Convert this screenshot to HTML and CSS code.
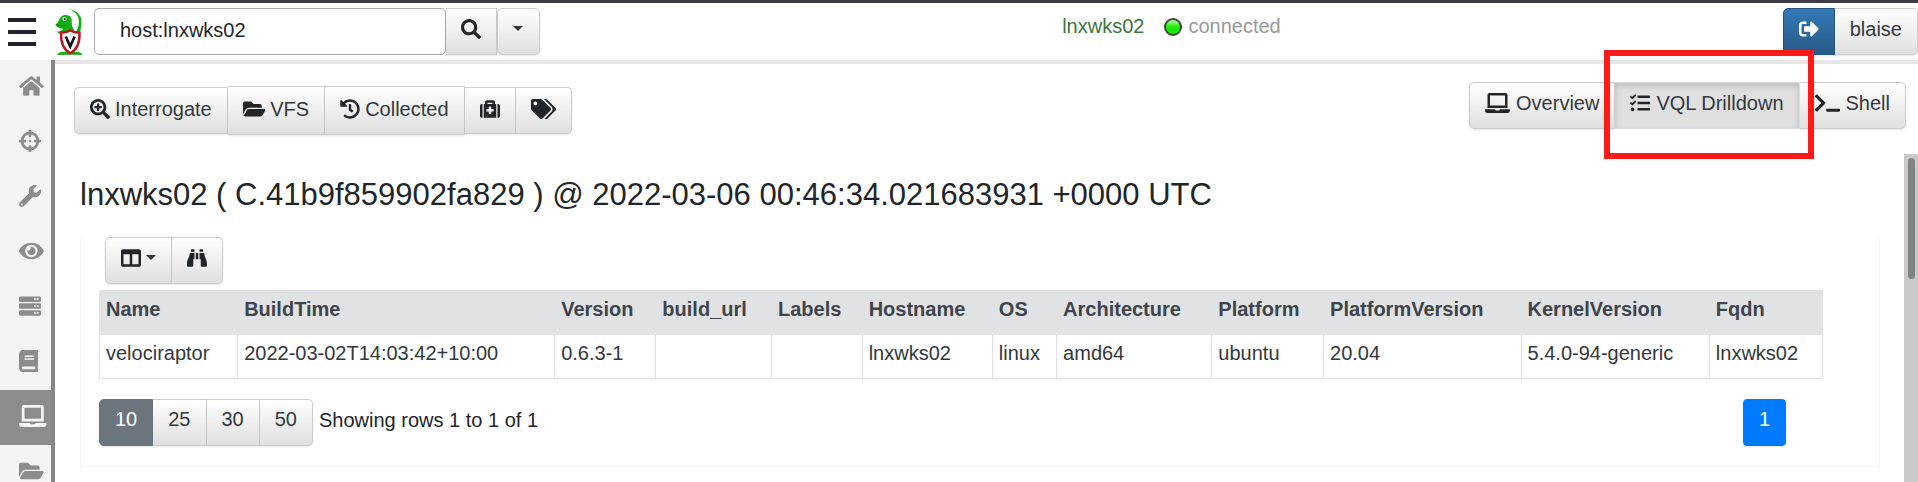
FILE: index.html
```html
<!DOCTYPE html>
<html lang="en">
<head>
<meta charset="utf-8">
<title>Velociraptor - VQL Drilldown</title>
<link rel="stylesheet" href="styles.css">
</head>
<body>
<header class="topbar">
  <button class="menu" aria-label="Menu"><span></span><span></span><span></span></button>
  <svg class="logo" viewBox="0 0 28 46" aria-hidden="true">
    <path d="M14.500 .3C20 1.500 26 5 26.400 11c.3 5-.6 10-1.800 13l-3.400-1.500c2.400-4 3.300-9 2.300-13C22.600 5 19 2.500 14.500.3z" fill="#10b010"/>
    <path d="M.4 15.600 3 13.500C4.500 9.500 6 6.500 10 6c4.500-.4 7 2.500 6.800 6.500-.2 3 0 6 3 9L13 22l-7.500 3c-2-.3-3-1.500-3.300-2.600 2 .4 4-.5 6-2.400C5.500 19.500 1 18.500.4 15.600z" fill="#10b010"/>
    <path d="M1.500 15.600c3 1.400 6 1.600 9 .6" stroke="#06700a" fill="none"/>
    <circle cx="9.500" cy="10" r="2" fill="#fff"/><circle cx="9.800" cy="10.100" r="1" fill="#111"/>
    <path d="M2 46c1-2.600 5-3.600 8-3.200h9c4-.4 7.500.5 8.600 3.200l-9-.3H12z" fill="#10b010"/>
    <path d="M15.300 21.500c3 1.800 6 2.300 9.200 2.300.4 9-1.500 16.500-9.200 20.400C7.600 40.300 5.700 32.800 6.100 23.800c3.200 0 6.200-.5 9.200-2.300z" fill="#fff" stroke="#c01420" stroke-width="2.400"/>
    <path d="M10.800 27.500l4.400 10 4.400-10" fill="none" stroke="#111" stroke-width="2.600"/>
  </svg>
  <form class="search">
    <input type="text" value="host:lnxwks02" aria-label="Search clients">
    <button class="btn" type="button" aria-label="Search"><svg viewBox="0 0 512 512"><path d="M505 442.700L405.300 343c-4.500-4.500-10.600-7-17-7H372c27.600-35.300 44-79.700 44-128C416 93.100 322.900 0 208 0S0 93.100 0 208s93.100 208 208 208c48.300 0 92.700-16.400 128-44v16.300c0 6.400 2.500 12.500 7 17l99.700 99.700c9.400 9.400 24.600 9.400 33.900 0l28.300-28.300c9.400-9.400 9.400-24.600.1-34zM208 336c-70.700 0-128-57.200-128-128 0-70.700 57.200-128 128-128 70.700 0 128 57.200 128 128 0 70.700-57.200 128-128 128z"/></svg></button>
    <button class="btn" type="button" aria-label="Search options"><span class="caret"></span></button>
  </form>
  <div class="client"><a href="#client">lnxwks02</a><span class="led"></span><span>connected</span></div>
  <div class="group user">
    <button class="btn primary" aria-label="Log out"><svg viewBox="0 0 512 512"><path d="M497 273L329 441c-15 15-41 4.500-41-17v-96H152c-13.300 0-24-10.700-24-24v-96c0-13.300 10.700-24 24-24h136V88c0-21.400 25.900-32 41-17l168 168c9.300 9.400 9.300 24.600 0 34zM192 436v-40c0-6.600-5.400-12-12-12H96c-17.700 0-32-14.300-32-32V160c0-17.700 14.300-32 32-32h84c6.600 0 12-5.400 12-12V76c0-6.600-5.400-12-12-12H96c-53 0-96 43-96 96v192c0 53 43 96 96 96h84c6.600 0 12-5.400 12-12z"/></svg></button>
    <button class="btn">blaise</button>
  </div>
</header>
<div class="layout">
  <nav class="sidebar">
    <a href="#home" aria-label="Home"><svg viewBox="0 0 576 512"><path d="M280.370 148.260L96 300.110V464a16 16 0 0 0 16 16l112.060-.29a16 16 0 0 0 15.920-16V368a16 16 0 0 1 16-16h64a16 16 0 0 1 16 16v95.640a16 16 0 0 0 16 16.050L464 480a16 16 0 0 0 16-16V300L295.670 148.260a12.190 12.190 0 0 0-15.300 0zM571.600 251.470L488 182.560V44.050a12 12 0 0 0-12-12h-56a12 12 0 0 0-12 12v72.610L318.470 43a48 48 0 0 0-61 0L4.340 251.470a12 12 0 0 0-1.600 16.900l25.500 31A12 12 0 0 0 45.150 301l235.220-193.740a12.190 12.190 0 0 1 15.300 0L530.900 301a12 12 0 0 0 16.900-1.600l25.500-31a12 12 0 0 0-1.700-16.930z"/></svg></a>
    <a href="#hunts" aria-label="Hunts"><svg viewBox="0 0 512 512"><path d="M500 224h-30.364C455.724 130.325 381.675 56.276 288 42.364V12c0-6.627-5.373-12-12-12h-40c-6.627 0-12 5.373-12 12v30.364C130.325 56.276 56.276 130.325 42.364 224H12c-6.627 0-12 5.373-12 12v40c0 6.627 5.373 12 12 12h30.364C56.276 381.675 130.325 455.724 224 469.636V500c0 6.627 5.373 12 12 12h40c6.627 0 12-5.373 12-12v-30.364C381.675 455.724 455.724 381.675 469.636 288H500c6.627 0 12-5.373 12-12v-40c0-6.627-5.373-12-12-12zM288 404.634V364c0-6.627-5.373-12-12-12h-40c-6.627 0-12 5.373-12 12v40.634C165.826 392.232 119.783 346.243 107.366 288H148c6.627 0 12-5.373 12-12v-40c0-6.627-5.373-12-12-12h-40.634C119.768 165.826 165.757 119.783 224 107.366V148c0 6.627 5.373 12 12 12h40c6.627 0 12-5.373 12-12v-40.634C346.174 119.768 392.217 165.757 404.634 224H364c-6.627 0-12 5.373-12 12v40c0 6.627 5.373 12 12 12h40.634C392.232 346.174 346.243 392.217 288 404.634zM288 256c0 17.673-14.327 32-32 32s-32-14.327-32-32c0-17.673 14.327-32 32-32s32 14.327 32 32z"/></svg></a>
    <a href="#artifacts" aria-label="Artifacts"><svg viewBox="0 0 512 512"><path d="M507.730 109.100c-2.240-9.030-13.540-12.090-20.120-5.510l-74.360 74.360-67.880-11.310-11.310-67.880 74.360-74.360c6.620-6.620 3.430-17.900-5.660-20.160-47.380-11.740-99.550.91-136.580 37.930-39.640 39.640-50.550 97.100-34.050 147.200L18.740 402.760c-24.990 24.990-24.990 65.510 0 90.500 24.990 24.990 65.510 24.990 90.500 0l213.210-213.210c50.120 16.710 107.470 5.680 147.370-34.220 37.070-37.070 49.700-89.320 37.910-136.730zM64 472c-13.250 0-24-10.750-24-24 0-13.260 10.750-24 24-24s24 10.740 24 24c0 13.250-10.750 24-24 24z"/></svg></a>
    <a href="#events" aria-label="Server events"><svg viewBox="0 0 576 512"><path d="M572.520 241.400C518.290 135.590 410.930 64 288 64S57.680 135.640 3.480 241.410a32.350 32.350 0 0 0 0 29.190C57.710 376.410 165.070 448 288 448s230.320-71.640 284.520-177.410a32.350 32.350 0 0 0 0-29.190zM288 400a144 144 0 1 1 144-144 143.930 143.930 0 0 1-144 144zm0-240a95.310 95.310 0 0 0-25.310 3.790 47.850 47.850 0 0 1-66.900 66.900A95.780 95.780 0 1 0 288 160z"/></svg></a>
    <a href="#server" aria-label="Server artifacts"><svg viewBox="0 0 512 512"><path fill-rule="evenodd" d="M480 160H32c-18 0-32-14-32-32V64c0-18 14-32 32-32h448c18 0 32 14 32 32v64c0 18-14 32-32 32zM344 96a24 24 0 1 0 48 0 24 24 0 1 0-48 0zM408 96a24 24 0 1 0 48 0 24 24 0 1 0-48 0zM480 320H32c-18 0-32-14-32-32v-64c0-18 14-32 32-32h448c18 0 32 14 32 32v64c0 18-14 32-32 32zM344 256a24 24 0 1 0 48 0 24 24 0 1 0-48 0zM408 256a24 24 0 1 0 48 0 24 24 0 1 0-48 0zM480 480H32c-18 0-32-14-32-32v-64c0-18 14-32 32-32h448c18 0 32 14 32 32v64c0 18-14 32-32 32zM344 416a24 24 0 1 0 48 0 24 24 0 1 0-48 0zM408 416a24 24 0 1 0 48 0 24 24 0 1 0-48 0z"/></svg></a>
    <a href="#notebooks" aria-label="Notebooks"><svg viewBox="0 0 448 512"><path d="M448 360V24c0-13.300-10.700-24-24-24H96C43 0 0 43 0 96v320c0 53 43 96 96 96h328c13.300 0 24-10.700 24-24v-16c0-7.500-3.500-14.300-8.900-18.700-4.200-15.400-4.200-59.300 0-74.700 5.400-4.300 8.900-11.100 8.900-18.600zM128 134c0-3.300 2.700-6 6-6h212c3.300 0 6 2.700 6 6v20c0 3.300-2.700 6-6 6H134c-3.300 0-6-2.700-6-6v-20zm0 64c0-3.300 2.700-6 6-6h212c3.300 0 6 2.700 6 6v20c0 3.300-2.700 6-6 6H134c-3.300 0-6-2.700-6-6v-20zm253.400 250H96c-17.700 0-32-14.300-32-32 0-17.600 14.400-32 32-32h285.400c-1.900 17.100-1.900 46.900 0 64z"/></svg></a>
    <a href="#host" class="active" aria-label="Host information"><svg viewBox="0 0 640 512"><path d="M624 416H381.540c-.74 19.810-14.710 32-32.740 32H288c-18.690 0-33.020-17.470-32.770-32H16c-8.800 0-16 7.200-16 16v16c0 35.200 28.800 64 64 64h512c35.200 0 64-28.800 64-64v-16c0-8.800-7.200-16-16-16zM576 48c0-26.400-21.600-48-48-48H112C85.600 0 64 21.600 64 48v336h512V48zm-64 272H128V64h384v256z"/></svg></a>
    <a href="#vfs" aria-label="Virtual filesystem"><svg viewBox="0 0 576 512"><path d="M572.694 292.093L500.270 416.248A63.997 63.997 0 0 1 444.989 448H45.025c-18.523 0-30.064-20.093-20.731-36.093l72.424-124.155A64 64 0 0 1 152 256h399.964c18.523 0 30.064 20.093 20.730 36.093zM152 224h328v-48c0-26.510-21.490-48-48-48H272l-64-64H48C21.490 64 0 85.490 0 112v278.046l69.077-118.418C86.214 242.250 117.989 224 152 224z"/></svg></a>
  </nav>
  <main class="main">
    <div class="toolbar">
      <div class="group actions">
        <button class="btn"><svg viewBox="0 0 512 512"><path d="M304 192v32c0 6.600-5.400 12-12 12h-56v56c0 6.600-5.400 12-12 12h-32c-6.600 0-12-5.400-12-12v-56h-56c-6.600 0-12-5.400-12-12v-32c0-6.600 5.400-12 12-12h56v-56c0-6.600 5.400-12 12-12h32c6.600 0 12 5.400 12 12v56h56c6.600 0 12 5.400 12 12zM505 442.700L405.300 343c-4.500-4.500-10.600-7-17-7H372c27.600-35.300 44-79.700 44-128C416 93.100 322.900 0 208 0S0 93.100 0 208s93.100 208 208 208c48.300 0 92.700-16.400 128-44v16.300c0 6.400 2.500 12.500 7 17l99.700 99.700c9.400 9.400 24.600 9.400 33.900 0l28.300-28.300c9.400-9.400 9.400-24.600.1-34zM208 344c-75 0-136-61-136-136 0-75 61-136 136-136 75 0 136 61 136 136 0 75-61 136-136 136z"/></svg>Interrogate</button>
        <a class="btn tall" href="#files"><svg viewBox="0 0 576 512"><path d="M572.694 292.093L500.270 416.248A63.997 63.997 0 0 1 444.989 448H45.025c-18.523 0-30.064-20.093-20.731-36.093l72.424-124.155A64 64 0 0 1 152 256h399.964c18.523 0 30.064 20.093 20.730 36.093zM152 224h328v-48c0-26.510-21.490-48-48-48H272l-64-64H48C21.490 64 0 85.490 0 112v278.046l69.077-118.418C86.214 242.250 117.989 224 152 224z"/></svg>VFS</a>
        <a class="btn tall" href="#collected"><svg viewBox="0 0 512 512"><path d="M504 255.531c.253 136.640-111.180 248.372-247.820 248.468-59.015.042-113.223-20.530-155.822-54.911-11.077-8.940-11.905-25.541-1.839-35.607l11.267-11.267c8.609-8.609 22.353-9.551 31.891-1.984C173.062 425.135 212.781 440 256 440c101.705 0 184-82.311 184-184 0-101.705-82.311-184-184-184-48.814 0-93.149 18.969-126.068 49.932l50.754 50.754c10.080 10.080 2.941 27.314-11.313 27.314H24c-8.837 0-16-7.163-16-16V38.627c0-14.254 17.234-21.393 27.314-11.314l49.372 49.372C129.209 34.136 189.552 8 256 8c136.810 0 247.747 110.780 248 247.531zm-180.912 78.784l9.823-12.630c8.138-10.463 6.253-25.542-4.210-33.679L288 256.349V152c0-13.255-10.745-24-24-24h-16c-13.255 0-24 10.745-24 24v135.651l65.409 50.874c10.463 8.137 25.541 6.253 33.679-4.210z"/></svg>Collected</a>
        <button class="btn" aria-label="Quarantine"><svg viewBox="0 0 512 512"><path d="M96 480h320V128h-32V80c0-26.510-21.490-48-48-48H176c-26.510 0-48 21.490-48 48v48H96v352zm96-384h128v32H192V96zm320 80v256c0 26.510-21.490 48-48 48h-16V128h16c26.510 0 48 21.490 48 48zM64 480H48c-26.510 0-48-21.490-48-48V176c0-26.510 21.490-48 48-48h16v352zm288-208v32c0 8.837-7.163 16-16 16h-48v48c0 8.837-7.163 16-16 16h-32c-8.837 0-16-7.163-16-16v-48h-48c-8.837 0-16-7.163-16-16v-32c0-8.837 7.163-16 16-16h48v-48c0-8.837 7.163-16 16-16h32c8.837 0 16 7.163 16 16v48h48c8.837 0 16 7.163 16 16z"/></svg></button>
        <button class="btn" aria-label="Labels"><svg viewBox="0 0 640 512"><path d="M497.941 225.941L286.059 14.059A48 48 0 0 0 252.118 0H48C21.490 0 0 21.490 0 48v204.118a48 48 0 0 0 14.059 33.941l211.882 211.882c18.744 18.745 49.136 18.746 67.882 0l204.118-204.118c18.745-18.745 18.745-49.137 0-67.882zM112 160c-26.510 0-48-21.490-48-48s21.490-48 48-48 48 21.490 48 48-21.490 48-48 48zm513.941 133.823L421.823 497.941c-18.745 18.745-49.137 18.745-67.882 0l-.36-.36L527.640 323.522c16.999-16.999 26.362-39.600 26.362-63.640s-9.362-46.641-26.362-63.640L331.397 0h48.721a48 48 0 0 1 33.941 14.059l211.882 211.882c18.745 18.745 18.745 49.137 0 67.882z"/></svg></button>
      </div>
      <div class="group views">
        <button class="btn"><svg viewBox="0 0 640 512"><path d="M624 416H381.540c-.74 19.810-14.710 32-32.740 32H288c-18.690 0-33.020-17.470-32.770-32H16c-8.800 0-16 7.200-16 16v16c0 35.200 28.800 64 64 64h512c35.200 0 64-28.800 64-64v-16c0-8.800-7.200-16-16-16zM576 48c0-26.400-21.600-48-48-48H112C85.600 0 64 21.600 64 48v336h512V48zm-64 272H128V64h384v256z"/></svg>Overview</button>
        <button class="btn pressed marked"><svg viewBox="0 0 512 512"><path d="M139.610 35.500a12 12 0 0 0-17 0L58.930 98.810l-22.700-22.120a12 12 0 0 0-17 0L3.530 92.410a12 12 0 0 0 0 17l47.590 47.400a12.780 12.780 0 0 0 17.610 0l15.590-15.620L156.520 69a12.090 12.090 0 0 0 .09-17zm0 159.190a12 12 0 0 0-17 0l-63.680 63.720-22.700-22.100a12 12 0 0 0-17 0L3.530 252a12 12 0 0 0 0 17L51 316.500a12.770 12.770 0 0 0 17.600 0l15.700-15.690 72.200-72.220a12 12 0 0 0 .09-16.900zM64 368c-26.490 0-48.590 21.500-48.590 48S37.530 464 64 464a48 48 0 0 0 0-96zm432 16H208a16 16 0 0 0-16 16v32a16 16 0 0 0 16 16h288a16 16 0 0 0 16-16v-32a16 16 0 0 0-16-16zm0-320H208a16 16 0 0 0-16 16v32a16 16 0 0 0 16 16h288a16 16 0 0 0 16-16V80a16 16 0 0 0-16-16zm0 160H208a16 16 0 0 0-16 16v32a16 16 0 0 0 16 16h288a16 16 0 0 0 16-16v-32a16 16 0 0 0-16-16z"/></svg>VQL Drilldown</button>
        <button class="btn"><svg viewBox="0 0 640 512"><path d="M257.981 272.971L63.638 467.314c-9.373 9.373-24.569 9.373-33.941 0L7.029 444.647c-9.357-9.357-9.375-24.522-.04-33.901L161.011 256 6.990 101.255c-9.335-9.379-9.317-24.544.04-33.901l22.667-22.667c9.373-9.373 24.569-9.373 33.941 0L257.981 239.030c9.373 9.372 9.373 24.568 0 33.941zM640 456v-32c0-13.255-10.745-24-24-24H312c-13.255 0-24 10.745-24 24v32c0 13.255 10.745 24 24 24h304c13.255 0 24-10.745 24-24z"/></svg>Shell</button>
      </div>
    </div>
    <div class="scroller">
      <section class="report">
        <h1>lnxwks02 ( C.41b9f859902fa829 ) @ 2022-03-06 00:46:34.021683931 +0000 UTC</h1>
        <div class="card">
          <div class="group table-tools">
            <button class="btn" aria-label="Columns"><svg viewBox="0 0 512 512"><path d="M464 32H48C21.490 32 0 53.490 0 80v352c0 26.510 21.490 48 48 48h416c26.510 0 48-21.490 48-48V80c0-26.510-21.490-48-48-48zM224 416H64V160h160v256zm224 0H288V160h160v256z"/></svg><span class="caret"></span></button>
            <button class="btn" aria-label="Inspect raw data"><svg viewBox="0 0 512 512"><path d="M416 48c0-8.840-7.160-16-16-16h-64c-8.840 0-16 7.160-16 16v48h96V48zM63.910 159.990C61.400 253.840 3.460 274.220 0 404v44c0 17.670 14.330 32 32 32h96c17.670 0 32-14.330 32-32V288h32V128H95.840c-17.630 0-31.450 14.370-31.930 31.990zm384.180 0c-.48-17.620-14.300-31.990-31.930-31.990H320v160h32v160c0 17.670 14.330 32 32 32h96c17.670 0 32-14.330 32-32v-44c-3.460-129.780-61.400-150.160-63.910-244.010zM176 32h-64c-8.840 0-16 7.160-16 16v48h96V48c0-8.840-7.160-16-16-16zm48 256h64V128h-64v160z"/></svg></button>
          </div>
          <table>
            <thead>
              <tr><th>Name</th><th>BuildTime</th><th>Version</th><th>build_url</th><th>Labels</th><th>Hostname</th><th>OS</th><th>Architecture</th><th>Platform</th><th>PlatformVersion</th><th>KernelVersion</th><th>Fqdn</th></tr>
            </thead>
            <tbody>
              <tr><td>velociraptor</td><td>2022-03-02T14:03:42+10:00</td><td>0.6.3-1</td><td></td><td></td><td>lnxwks02</td><td>linux</td><td>amd64</td><td>ubuntu</td><td>20.04</td><td>5.4.0-94-generic</td><td>lnxwks02</td></tr>
            </tbody>
          </table>
          <div class="pager">
            <div class="group sizes">
              <button class="btn selected">10</button><button class="btn">25</button><button class="btn">30</button><button class="btn">50</button>
            </div>
            <span class="summary">Showing rows 1 to 1 of 1</span>
            <button class="btn page">1</button>
          </div>
        </div>
      </section>
      <div class="track"><div class="thumb"></div></div>
    </div>
  </main>
</div>
</body>
</html>
```
FILE: styles.css
```css
* { box-sizing: border-box; }

body {
  margin: 0;
  height: 100vh;
  display: flex;
  flex-direction: column;
  overflow: hidden;
  border-top: 3px solid #3c3b41;
  background: #fff;
  color: #212529;
  font: 20px/28px "Liberation Sans", Arial, sans-serif;
}

svg { height: 20px; flex: none; fill: currentColor; }
a { color: inherit; text-decoration: none; }

/* Buttons */
.btn {
  display: flex;
  align-items: flex-start;
  height: 47px;
  margin: 0;
  padding: 6px 15px 0;
  border: 1px solid #ccc;
  border-left-width: 0;
  background: linear-gradient(#fff, #dfdfdf);
  box-shadow: 0 1px 2px rgba(0, 0, 0, .1);
  color: #33383d;
  font: inherit;
  white-space: nowrap;
}
.btn svg { margin-top: 4px; color: #212529; }
.group { display: flex; }
.group .btn:first-child { border-left-width: 1px; border-radius: 5px 0 0 5px; }
.group .btn:last-child { border-radius: 0 5px 5px 0; }
.caret {
  margin-top: 11px;
  border: 5px solid transparent;
  border-top-color: currentColor;
  border-bottom: 0;
}

/* Header */
.topbar {
  flex: none;
  display: flex;
  align-items: flex-start;
  height: 57px;
  padding: 5px 0 0 8px;
}
.menu {
  display: flex;
  flex-direction: column;
  gap: 8px;
  margin: 0;
  padding: 10px 0 0;
  border: 0;
  background: none;
}
.menu span { width: 28px; height: 4px; background: #212529; }
.logo { width: 28px; height: 46px; margin: 1px 11px 0 19px; }
.search { display: flex; }
.search input {
  width: 352px;
  height: 47px;
  padding: 0 25px 3px;
  border: 1px solid #aaa;
  border-radius: 5px;
  color: #212529;
  font: inherit;
}
.search .btn:last-child { border-left-width: 1px; border-radius: 5px; }
.search .btn:last-child { padding-right: 16px; }
.client { display: flex; align-items: center; margin-left: auto; padding-top: 4px; color: #999; }
.client a { color: #3c763d; }
.led {
  width: 18px;
  height: 18px;
  margin: 2px 6px 0 20px;
  border: 2px solid #3c4a3c;
  border-radius: 50%;
  background: linear-gradient(#b8f8b0, #1fee00 50%, #16e600);
}
.user { margin-left: 502px; }
.btn.primary { border-color: #245580; background: linear-gradient(#337ab7, #265a88); }
.btn.primary svg { color: #fff; }

/* Sidebar */
.layout { flex: 1; display: flex; min-height: 0; }
.sidebar {
  flex: none;
  width: 55px;
  overflow: hidden;
  border-right: 4px solid #868686;
  background: #f4f4f4;
  color: #8c8c8c;
}
.sidebar a { display: flex; align-items: center; height: 55px; padding: 0 0 3px 19px; }
.sidebar svg { height: 22px; }
.sidebar .active { background: #8c8c8c; color: #f4f4f4; }

/* Content */
.main {
  flex: 1;
  display: flex;
  flex-direction: column;
  min-width: 0;
  border-top: 4px solid #e6e6e6;
}
.toolbar {
  flex: none;
  display: flex;
  justify-content: space-between;
  align-items: flex-start;
  padding: 18px 12px 19px 19px;
}
.actions { align-items: center; margin-top: 4px; }
.actions .btn, .views .btn { gap: 6px; }
.actions .btn { gap: 5px; padding-top: 7px; }
.actions .btn.tall { height: 49px; padding-top: 8px; }
.btn.pressed {
  border-color: #dbdbdb;
  background: #e0e0e0;
  box-shadow: inset 0 3px 6px rgba(0, 0, 0, .16);
}
.marked { position: relative; z-index: 1; }
.marked::after {
  content: "";
  position: absolute;
  inset: -33px -15px -31px -11px;
  border: 6px solid #ff1a1a;
  pointer-events: none;
}

.scroller { flex: 1; display: flex; min-height: 0; }
.report { flex: 1; min-width: 0; overflow: hidden; padding: 22px 24px 0 25px; }
.track { width: 14px; padding: 4px; background: #c9c9c9; }
.thumb { width: 7px; height: 121px; border-radius: 4px; background: #7f8484; }

h1 { margin: 0 0 24px; font-size: 31px; line-height: 37px; font-weight: 400; }
.card {
  padding: 0 56px 20px 18px;
  border: 1px solid #f6f6f6;
  border-top: 0;
}
.table-tools { margin: 0 0 6px 6px; }
.table-tools .caret { margin-left: 5px; }

table { width: 100%; border-collapse: collapse; }
th, td {
  height: 44px;
  padding: 4px 6px 11px;
  border: 1px solid #dee2e6;
  text-align: left;
  vertical-align: top;
}
th { border-color: #e1e3e6; background: #e1e2e4; color: #3f454b; }
td { color: #33383d; }

.pager { display: flex; align-items: flex-start; margin-top: 20px; }
.pager .btn { padding-top: 5px; }
.btn.selected { border-color: #6c757d; background: #6c757d; color: #fff; }
.summary { margin-left: 6px; padding-top: 7px; }
.btn.page {
  margin: 0 37px 0 auto;
  border: 1px solid #007bff;
  border-radius: 4px;
  background: #007bff;
  color: #fff;
}
```
